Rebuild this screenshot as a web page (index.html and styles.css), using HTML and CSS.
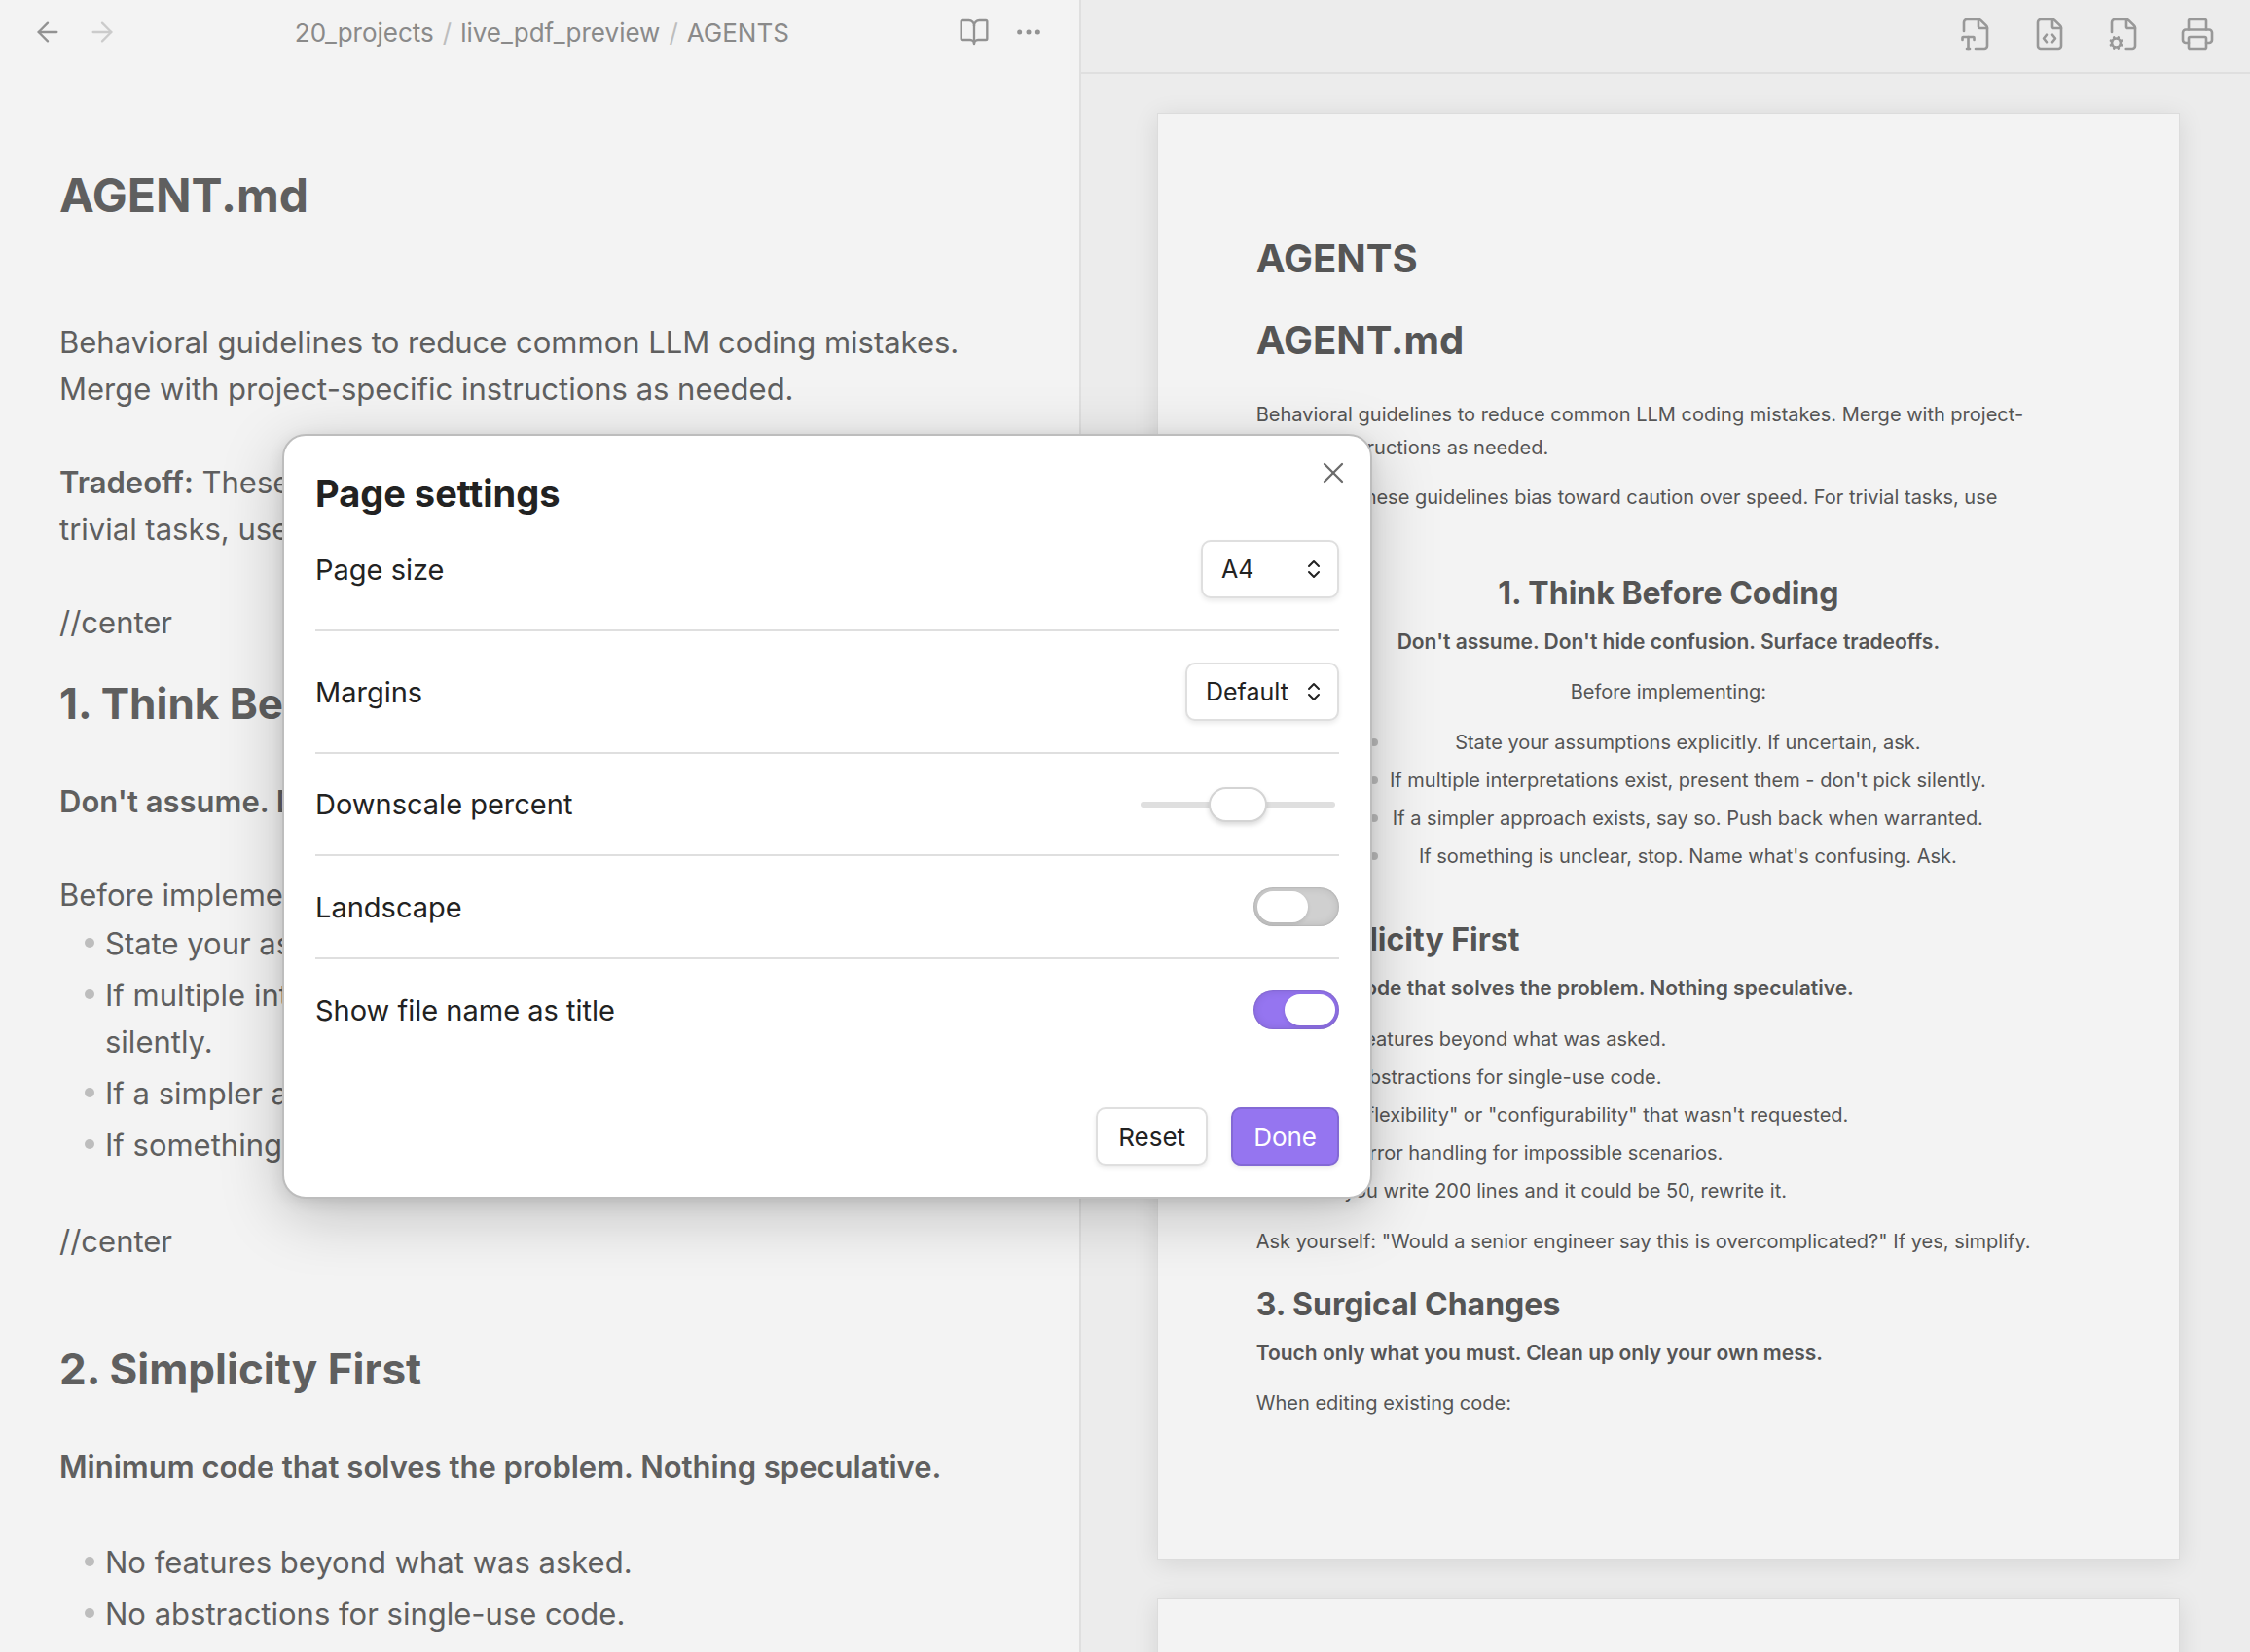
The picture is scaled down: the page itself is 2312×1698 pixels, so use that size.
FILE: index.html
```html
<!DOCTYPE html>
<html lang="en">
<head>
<meta charset="utf-8">
<meta name="viewport" content="width=device-width, initial-scale=1">
<title>AGENTS</title>
<link rel="stylesheet" href="styles.css">
</head>
<body>
<div class="workspace">
  <section class="pane editor">
    <header class="editor-header">
      <nav class="actions" aria-label="History">
        <button type="button" class="icon-button" aria-label="Back">
          <svg class="icon" viewBox="0 0 24 24"><path d="m12 19-7-7 7-7"/><path d="M19 12H5"/></svg>
        </button>
        <button type="button" class="icon-button is-muted" aria-label="Forward">
          <svg class="icon" viewBox="0 0 24 24"><path d="M5 12h14"/><path d="m12 5 7 7-7 7"/></svg>
        </button>
      </nav>
      <nav class="breadcrumb" aria-label="Breadcrumb">
        <a href="#">20_projects</a><span class="separator">/</span><a href="#">live_pdf_preview</a><span class="separator">/</span><span>AGENTS</span>
      </nav>
      <div class="actions">
        <button type="button" class="icon-button" aria-label="Reading view">
          <svg class="icon" viewBox="0 0 24 24"><path d="M12 7v14"/><path d="M3 18a1 1 0 0 1-1-1V4a1 1 0 0 1 1-1h5a4 4 0 0 1 4 4 4 4 0 0 1 4-4h5a1 1 0 0 1 1 1v13a1 1 0 0 1-1 1h-6a3 3 0 0 0-3 3 3 3 0 0 0-3-3z"/></svg>
        </button>
        <button type="button" class="icon-button" aria-label="More options">
          <svg class="icon" viewBox="0 0 24 24"><circle cx="12" cy="12" r="1"/><circle cx="19" cy="12" r="1"/><circle cx="5" cy="12" r="1"/></svg>
        </button>
      </div>
    </header>
    <article class="note">
      <h1>AGENT.md</h1>
      <p>Behavioral guidelines to reduce common LLM coding mistakes. Merge with project-specific instructions as needed.</p>
      <p><strong>Tradeoff:</strong> These guidelines bias toward caution over speed. For trivial tasks, use judgment.</p>
      <p class="directive">//center</p>
      <h2>1. Think Before Coding</h2>
      <p><strong>Don't assume. Don't hide confusion. Surface tradeoffs.</strong></p>
      <p class="lead-in">Before implementing:</p>
      <ul>
        <li>State your assumptions explicitly. If uncertain, ask.</li>
        <li>If multiple interpretations exist, present them - don't pick silently.</li>
        <li>If a simpler approach exists, say so. Push back when warranted.</li>
        <li>If something is unclear, stop. Name what's confusing. Ask.</li>
      </ul>
      <p>//center</p>
      <h2>2. Simplicity First</h2>
      <p><strong>Minimum code that solves the problem. Nothing speculative.</strong></p>
      <ul>
        <li>No features beyond what was asked.</li>
        <li>No abstractions for single-use code.</li>
      </ul>
    </article>
  </section>

  <section class="pane preview">
    <header class="preview-header">
      <button type="button" class="tool-button" aria-label="Font settings">
        <svg class="icon" viewBox="0 0 24 24"><path d="M12 22h6a2 2 0 0 0 2-2V8a2.4 2.4 0 0 0-.706-1.706l-3.588-3.588A2.4 2.4 0 0 0 14 2H6a2 2 0 0 0-2 2v6"/><path d="M14 2v5a1 1 0 0 0 1 1h5"/><path d="M3 16v-1.5a.5.5 0 0 1 .5-.5h7a.5.5 0 0 1 .5.5V16"/><path d="M6 22h2"/><path d="M7 14v8"/></svg>
      </button>
      <button type="button" class="tool-button" aria-label="Custom styles">
        <svg class="icon" viewBox="0 0 24 24"><path d="M6 22a2 2 0 0 1-2-2V4a2 2 0 0 1 2-2h8a2.4 2.4 0 0 1 1.704.706l3.588 3.588A2.4 2.4 0 0 1 20 8v12a2 2 0 0 1-2 2z"/><path d="M14 2v5a1 1 0 0 0 1 1h5"/><path d="M10 12.5 8 15l2 2.5"/><path d="m14 12.5 2 2.5-2 2.5"/></svg>
      </button>
      <button type="button" class="tool-button" aria-label="Page settings">
        <svg class="icon" viewBox="0 0 24 24"><path d="M15 8a1 1 0 0 1-1-1V2a2.4 2.4 0 0 1 1.704.706l3.588 3.588A2.4 2.4 0 0 1 20 8z"/><path d="M20 8v12a2 2 0 0 1-2 2h-4.182"/><path d="m3.305 19.53.923-.382"/><path d="M4 10.592V4a2 2 0 0 1 2-2h8"/><path d="m4.228 16.852-.924-.383"/><path d="m5.852 15.228-.383-.923"/><path d="m5.852 20.772-.383.924"/><path d="m8.148 15.228.383-.923"/><path d="m8.53 21.696-.382-.924"/><path d="m9.773 16.852.922-.383"/><path d="m9.773 19.148.922.383"/><circle cx="7" cy="18" r="3"/></svg>
      </button>
      <button type="button" class="tool-button" aria-label="Print">
        <svg class="icon" viewBox="0 0 24 24"><path d="M6 18H4a2 2 0 0 1-2-2v-5a2 2 0 0 1 2-2h16a2 2 0 0 1 2 2v5a2 2 0 0 1-2 2h-2"/><path d="M6 9V3a1 1 0 0 1 1-1h10a1 1 0 0 1 1 1v6"/><rect x="6" y="14" width="12" height="8" rx="1"/></svg>
      </button>
    </header>
    <div class="sheets">
      <article class="sheet">
        <h1>AGENTS</h1>
        <h1>AGENT.md</h1>
        <p>Behavioral guidelines to reduce common LLM coding mistakes. Merge with project-specific instructions as needed.</p>
        <p><strong>Tradeoff:</strong> These guidelines bias toward caution over speed. For trivial tasks, use judgment.</p>
        <div class="centered">
          <h2>1. Think Before Coding</h2>
          <p><strong>Don't assume. Don't hide confusion. Surface tradeoffs.</strong></p>
          <p>Before implementing:</p>
          <ul>
            <li>State your assumptions explicitly. If uncertain, ask.</li>
            <li>If multiple interpretations exist, present them - don't pick silently.</li>
            <li>If a simpler approach exists, say so. Push back when warranted.</li>
            <li>If something is unclear, stop. Name what's confusing. Ask.</li>
          </ul>
        </div>
        <h2>2. Simplicity First</h2>
        <p><strong>Minimum code that solves the problem. Nothing speculative.</strong></p>
        <ul>
          <li>No features beyond what was asked.</li>
          <li>No abstractions for single-use code.</li>
          <li>No "flexibility" or "configurability" that wasn't requested.</li>
          <li>No error handling for impossible scenarios.</li>
          <li>If you write 200 lines and it could be 50, rewrite it.</li>
        </ul>
        <p>Ask yourself: "Would a senior engineer say this is overcomplicated?" If yes, simplify.</p>
        <h2>3. Surgical Changes</h2>
        <p><strong>Touch only what you must. Clean up only your own mess.</strong></p>
        <p>When editing existing code:</p>
      </article>
      <article class="sheet"></article>
    </div>
  </section>
</div>

<form class="modal" role="dialog" aria-labelledby="modal-title">
  <button type="button" class="close-button" aria-label="Close">
    <svg class="icon" viewBox="0 0 24 24"><path d="M18 6 6 18"/><path d="m6 6 12 12"/></svg>
  </button>
  <h2 class="modal-title" id="modal-title">Page settings</h2>
  <div class="setting">
    <label for="page-size">Page size</label>
    <span class="dropdown dropdown-small">
      <select id="page-size"><option>A4</option><option>A5</option><option>Letter</option></select>
      <svg class="chevrons" viewBox="0 0 14 20"><path d="m2 7 5-5 5 5"/><path d="m2 13 5 5 5-5"/></svg>
    </span>
  </div>
  <div class="setting">
    <label for="margins">Margins</label>
    <span class="dropdown">
      <select id="margins"><option>Default</option><option>None</option></select>
      <svg class="chevrons" viewBox="0 0 14 20"><path d="m2 7 5-5 5 5"/><path d="m2 13 5 5 5-5"/></svg>
    </span>
  </div>
  <div class="setting">
    <label for="downscale">Downscale percent</label>
    <input type="range" id="downscale" class="slider" min="0" max="100" value="50">
  </div>
  <div class="setting">
    <label for="landscape">Landscape</label>
    <input type="checkbox" id="landscape" class="toggle">
  </div>
  <div class="setting">
    <label for="show-title">Show file name as title</label>
    <input type="checkbox" id="show-title" class="toggle" checked>
  </div>
  <div class="modal-buttons">
    <button type="reset" class="button">Reset</button>
    <button type="submit" class="button is-primary">Done</button>
  </div>
</form>
</body>
</html>
```
FILE: styles.css
```css
* {
  box-sizing: border-box;
}

body {
  margin: 0;
  font-family: Inter, "Liberation Sans", sans-serif;
  color: #5f5f5f;
  background: #f3f3f3;
}

button,
select,
input {
  margin: 0;
  font: inherit;
  color: inherit;
}

button {
  padding: 0;
  border: 0;
  background: none;
}

.icon {
  display: block;
  width: 32px;
  height: 32px;
  fill: none;
  stroke: currentColor;
  stroke-width: 1.75;
  stroke-linecap: round;
  stroke-linejoin: round;
}

/* Workspace */

.workspace {
  display: grid;
  grid-template-columns: calc(48% - 1px) 1fr;
  height: 100vh;
  overflow: hidden;
}

.pane {
  min-width: 0;
  overflow: hidden;
}

/* Editor pane */

.editor-header {
  display: flex;
  align-items: center;
  justify-content: space-between;
  height: 66px;
  padding: 0 24px 0 21px;
  font-size: 26px;
  color: #8a8a8a;
}

.actions {
  display: flex;
}

.icon-button {
  display: grid;
  place-items: center;
  width: 56px;
  height: 56px;
  color: #929292;
}

.icon-button.is-muted {
  color: #cbcbcb;
}

.breadcrumb {
  display: flex;
  gap: 9px;
  padding-left: 8px;
}

.breadcrumb a {
  color: inherit;
  text-decoration: none;
}

.separator {
  color: #bdbdbd;
}

.note {
  padding: 104px 56px 0 61px;
  font-size: 31px;
  line-height: 48px;
}

.note h1 {
  margin: 0 0 96px;
  font-size: 48px;
  line-height: 62px;
  font-weight: 700;
}

.note h2 {
  margin: 31px 0 48px;
  font-size: 44px;
  line-height: 57px;
  font-weight: 700;
}

.note p {
  margin: 0 0 48px;
}

.note .directive,
.note .lead-in {
  margin-bottom: 0;
}

.note p + h2 {
  margin-top: 79px;
}

.note .directive + h2 {
  margin-top: 31px;
}

strong {
  font-weight: 600;
}

ul {
  margin: 0;
  padding: 0;
  list-style: none;
}

li {
  position: relative;
}

li::before {
  content: "";
  position: absolute;
  top: 20px;
  left: -21px;
  width: 10px;
  height: 10px;
  border-radius: 50%;
  background: #bdbdbd;
}

.note ul {
  margin-bottom: 48px;
  padding-left: 47px;
}

.note li {
  padding: 2px 0 3px;
}

/* Preview pane */

.preview {
  border-left: 2px solid #dfdfdf;
  background: #ececec;
  color: #555;
}

.preview-header {
  display: flex;
  align-items: center;
  justify-content: flex-end;
  gap: 16px;
  height: 76px;
  padding: 0 24px 4px;
  border-bottom: 2px solid #dfdfdf;
  color: #989898;
}

.tool-button {
  display: grid;
  place-items: center;
  width: 60px;
  height: 60px;
}

.tool-button .icon {
  width: 36px;
  height: 36px;
}

.sheets {
  display: grid;
  gap: 40px;
  padding: 40px 72px 0 78px;
}

.sheet {
  aspect-ratio: 210 / 297;
  padding: 124px 101px 0;
  border: 1px solid #dcdcdc;
  background: #f3f3f3;
  box-shadow: 0 4px 24px rgba(0, 0, 0, 0.1);
  font-size: 20px;
  line-height: 34px;
}

.sheet h1 {
  margin: 0 0 34px;
  font-size: 40px;
  line-height: 50px;
  font-weight: 700;
}

.sheet h2 {
  margin: 28px 0 13px;
  font-size: 32px;
  line-height: 40px;
  font-weight: 700;
}

.sheet p {
  margin: 17px 0;
}

.sheet h2 + p {
  margin-top: 13px;
}

.sheet strong {
  font-size: 21px;
}

.sheet ul {
  margin: 18px 0;
  padding-left: 72px;
}

.sheet li + li {
  margin-top: 5px;
}

.sheet li::before {
  top: 13px;
  left: -20px;
  width: 8px;
  height: 8px;
}

.centered {
  margin-bottom: 49px;
  text-align: center;
}

.sheet .centered ul {
  width: fit-content;
  margin: 18px auto 0;
  padding-left: 40px;
}

/* Page settings dialog, floating over both panes */

.modal {
  position: absolute;
  top: 446px;
  left: 290px;
  width: 1120px;
  padding: 32px;
  border: 2px solid #bdbdbd;
  border-radius: 24px;
  background: #fff;
  box-shadow: 0 4px 16px rgba(0, 0, 0, 0.1), 0 16px 64px rgba(0, 0, 0, 0.22);
  color: #222;
  font-size: 29px;
  line-height: 39px;
}

.modal-title {
  margin: 0 0 21px;
  font-size: 38px;
  line-height: 54px;
  font-weight: 700;
}

.close-button {
  position: absolute;
  top: 20px;
  right: 20px;
  color: #6b6b6b;
}

.close-button .icon {
  width: 36px;
  height: 36px;
  stroke-width: 1.5;
}

.setting {
  display: flex;
  align-items: center;
  justify-content: space-between;
  padding: 32px 0;
  border-bottom: 2px solid #dfdfdf;
}

.modal-title + .setting {
  padding-top: 0;
}

.setting:nth-last-child(2) {
  padding-bottom: 0;
  border-bottom: 0;
}

.dropdown {
  position: relative;
  display: block;
  width: 158px;
  height: 60px;
}

.dropdown-small {
  width: 142px;
}

.dropdown select {
  appearance: none;
  width: 100%;
  height: 100%;
  padding: 0 36px 0 19px;
  border: 2px solid #dfdfdf;
  border-radius: 10px;
  background: #fff;
  box-shadow: 0 3px 5px rgba(0, 0, 0, 0.08);
  font-size: 25px;
}

.chevrons {
  position: absolute;
  top: 20px;
  right: 19px;
  width: 14px;
  height: 20px;
  fill: none;
  stroke: #222;
  stroke-width: 2;
  stroke-linecap: round;
  stroke-linejoin: round;
  pointer-events: none;
}

.slider {
  appearance: none;
  width: 200px;
  height: 6px;
  margin-right: 4px;
  border-radius: 3px;
  background: #dfdfdf;
}

.slider::-webkit-slider-thumb {
  appearance: none;
  width: 60px;
  height: 36px;
  border: 2px solid #d4d4d4;
  border-radius: 18px;
  background: #fff;
  box-shadow: 0 3px 5px rgba(0, 0, 0, 0.14);
}

.toggle {
  appearance: none;
  width: 88px;
  height: 40px;
  padding: 4px;
  border-radius: 20px;
  background: #d0d0d0;
  box-shadow: inset 0 0 10px rgba(0, 0, 0, 0.12), inset 0 0 2px rgba(0, 0, 0, 0.2);
}

.toggle::before {
  content: "";
  display: block;
  width: 52px;
  height: 32px;
  border-radius: 16px;
  background: #fff;
  box-shadow: 0 2px 4px rgba(0, 0, 0, 0.1);
}

.toggle:checked {
  background: #9575f0;
}

.toggle:checked::before {
  margin-left: 28px;
}

.modal-buttons {
  display: flex;
  justify-content: flex-end;
  gap: 24px;
  margin-top: 80px;
}

.button {
  height: 60px;
  padding: 0 21px;
  border: 2px solid #dfdfdf;
  border-radius: 10px;
  background: #fff;
  box-shadow: 0 3px 5px rgba(0, 0, 0, 0.08);
  font-size: 26px;
}

.button.is-primary {
  border-color: #8369d5;
  background: #9575f0;
  color: #fff;
}
```
